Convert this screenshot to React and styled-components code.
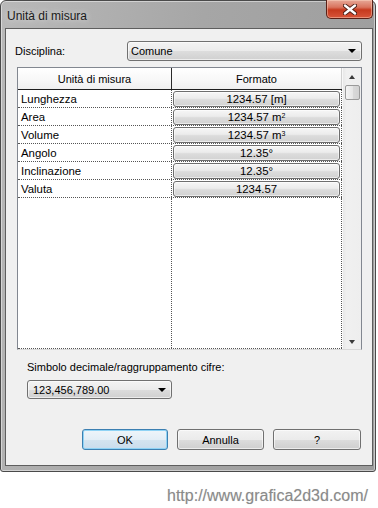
import React from 'react';
import styled, { createGlobalStyle } from 'styled-components';

const GlobalStyle = createGlobalStyle`
  html, body {
    margin: 0;
    padding: 0;
    background: #ffffff;
  }
  body {
    font-family: "Liberation Sans", Arial, sans-serif;
    font-size: 11px;
    color: #000;
  }
`;

// window frame
const Window = styled.div`
  box-sizing: border-box;
  width: 376px;
  height: 472px;
  border: 1px solid #4a4a4a;
  border-radius: 6px 6px 3px 3px;
  background: linear-gradient(100deg, #b9b9b9 0%, #a6a6a6 45%, #9c9c9c 100%);
  box-shadow: inset 0 0 0 1px rgba(255, 255, 255, 0.45);
  padding: 0 2px 5px 4px;
  display: flex;
  flex-direction: column;
`;

const TitleBar = styled.div`
  height: 27px;
  display: flex;
  align-items: flex-start;
  justify-content: space-between;
`;

const Title = styled.div`
  font-size: 12px;
  color: #1a1a1a;
  padding: 8px 0 0 2px;
  text-shadow: 0 0 6px rgba(255, 255, 255, 0.7);
`;

const CloseButton = styled.div`
  box-sizing: border-box;
  width: 47px;
  height: 19px;
  margin-top: -1px;
  border: 1px solid #5a2016;
  border-top: none;
  border-radius: 0 0 5px 5px;
  background: linear-gradient(180deg, #e7a897 0%, #d9745e 40%, #c6391d 55%, #d8553a 100%);
  box-shadow: inset 0 0 0 1px rgba(255, 220, 200, 0.45);
  display: flex;
  align-items: center;
  justify-content: center;
`;

const Client = styled.div`
  box-sizing: border-box;
  height: 438px;
  border: 1px solid #5e5e5e;
  background: #f0f0f0;
  padding: 12px 10px 15px 9px;
  display: flex;
  flex-direction: column;
`;

const FieldRow = styled.div`
  display: flex;
  align-items: center;
  justify-content: space-between;
`;

const Label = styled.span`
  line-height: 13px;
  white-space: nowrap;
`;

const Combo = styled.div`
  box-sizing: border-box;
  width: ${(p) => p.w}px;
  height: ${(p) => p.h}px;
  border: 1px solid #707070;
  border-radius: 3px;
  background: linear-gradient(180deg, #f3f3f3 0%, #ebebeb 50%, #dddddd 51%, #d0d0d0 100%);
  box-shadow: inset 0 0 0 1px rgba(255, 255, 255, 0.6);
  display: flex;
  align-items: center;
  justify-content: space-between;
  padding: 0 5px 0 ${(p) => p.pl}px;
`;

const Arrow = styled.span`
  width: 0;
  height: 0;
  border-left: 4px solid transparent;
  border-right: 4px solid transparent;
  border-top: 4px solid #000;
`;

const Grid = styled.div`
  box-sizing: border-box;
  height: 283px;
  margin: 6px 0 0 2px;
  border: 1px solid #828790;
  border-bottom-color: #d8d8d8;
  background: #fff;
  display: flex;
`;

const TableArea = styled.div`
  width: 324px;
  display: flex;
  flex-direction: column;
`;

const Header = styled.div`
  display: grid;
  grid-template-columns: 154px 1fr;
  height: 22px;
  box-sizing: border-box;
  border-bottom: 1px solid #1e1e1e;
  background: linear-gradient(180deg, #ffffff 0%, #f7f7f7 60%, #efefef 100%);
`;

const HeadCell = styled.div`
  display: flex;
  align-items: center;
  justify-content: center;
  border-right: 1px solid #2a2a2a;
  ${(p) => p.last && 'border-right-color: #d0d0d0;'}
`;

const Row = styled.div`
  display: grid;
  grid-template-columns: 154px 1fr;
  height: 18px;
  box-sizing: border-box;
  border-bottom: 1px dotted #555;
`;

const Filler = styled(Row)`
  flex: 1;
  height: auto;
`;

const NameCell = styled.div`
  border-right: 1px dotted #555;
  padding-left: 3px;
  display: flex;
  align-items: center;
  font-size: 11.4px;
`;

const FormatCell = styled.div`
  border-right: 1px dotted #555;
  padding: 1px 1px 0;
`;

const CellButton = styled.div`
  box-sizing: border-box;
  height: 16px;
  border: 1px solid #6e6e6e;
  border-radius: 3px;
  background: linear-gradient(180deg, #f6f6f6 0%, #ececec 45%, #dcdcdc 55%, #d2d2d2 100%);
  box-shadow: inset 0 0 0 1px rgba(255, 255, 255, 0.55);
  display: flex;
  align-items: center;
  justify-content: center;
  font-size: 11.4px;
  line-height: 12px;

  sup {
    font-size: 7px;
    line-height: 0;
    position: relative;
    top: -1px;
  }
`;

const ScrollBar = styled.div`
  flex: 1;
  display: flex;
  flex-direction: column;
  align-items: center;
  background: linear-gradient(90deg, #e8e8e8 0%, #f0f0f0 20%, #eeeeee 100%);
  border-left: 1px solid #f8f8f8;
`;

const ScrollArrow = styled.span`
  width: 0;
  height: 0;
  border-left: 3.5px solid transparent;
  border-right: 3.5px solid transparent;
  ${(p) =>
    p.down
      ? 'border-top: 4px solid #3a3a3a; margin-top: auto; margin-bottom: 5px;'
      : 'border-bottom: 4px solid #3a3a3a; margin-top: 7px;'}
`;

const Thumb = styled.div`
  box-sizing: border-box;
  width: 15px;
  height: 15px;
  margin-top: 6px;
  border: 1px solid #9a9a9a;
  border-radius: 2px;
  background: linear-gradient(90deg, #f4f4f4 0%, #e6e6e6 50%, #d9d9d9 51%, #d2d2d2 100%);
`;

const Section = styled.div`
  display: flex;
  flex-direction: column;
  gap: 6px;
  margin: 11px 0 0 12px;
`;

const Buttons = styled.div`
  display: flex;
  gap: 9px;
  margin: 30px 0 0 67px;
`;

const PushButton = styled.div`
  box-sizing: border-box;
  width: ${(p) => p.w}px;
  height: 21px;
  border: 1px solid ${(p) => (p.primary ? '#3c7fb1' : '#707070')};
  border-radius: 3px;
  background: ${(p) =>
    p.primary
      ? 'linear-gradient(180deg, #eef5fa 0%, #e3eef6 50%, #d4e4f0 51%, #c9dcec 100%)'
      : 'linear-gradient(180deg, #f2f2f2 0%, #ebebeb 50%, #dddddd 51%, #cfcfcf 100%)'};
  box-shadow: inset 0 0 0 1px ${(p) => (p.primary ? '#8fd3f5' : 'rgba(255,255,255,0.6)')};
  display: flex;
  align-items: center;
  justify-content: center;
`;

const Footer = styled.div`
  width: 368px;
  margin-top: 15px;
  text-align: right;
  font-family: "Liberation Sans", Arial, sans-serif;
  font-size: 16px;
  color: #8a8a8a;
  text-shadow: 0 0 1px #d8d8d8;
`;

const units = [
  { name: 'Lunghezza', format: <>1234.57 [m]</> },
  { name: 'Area', format: <>1234.57 m<sup>2</sup></> },
  { name: 'Volume', format: <>1234.57 m<sup>3</sup></> },
  { name: 'Angolo', format: <>12.35°</> },
  { name: 'Inclinazione', format: <>12.35°</> },
  { name: 'Valuta', format: <>1234.57</> },
];

const CloseIcon = () => (
  <svg width="14" height="11" viewBox="0 0 14 11">
    <path d="M2 1.5 L12 9.5 M12 1.5 L2 9.5" stroke="#4a1d14" strokeWidth="4.2" strokeLinecap="round" />
    <path d="M2 1.5 L12 9.5 M12 1.5 L2 9.5" stroke="#ffffff" strokeWidth="2.4" strokeLinecap="round" />
  </svg>
);

export default function App() {
  return (
    <>
      <GlobalStyle />
      <Window>
        <TitleBar>
          <Title>Unità di misura</Title>
          <CloseButton>
            <CloseIcon />
          </CloseButton>
        </TitleBar>
        <Client>
          <FieldRow>
            <Label>Disciplina:</Label>
            <Combo w={235} h={20} pl={3}>
              <span>Comune</span>
              <Arrow />
            </Combo>
          </FieldRow>

          <Grid>
            <TableArea>
              <Header>
                <HeadCell>Unità di misura</HeadCell>
                <HeadCell last>Formato</HeadCell>
              </Header>
              {units.map((u) => (
                <Row key={u.name}>
                  <NameCell>{u.name}</NameCell>
                  <FormatCell>
                    <CellButton>{u.format}</CellButton>
                  </FormatCell>
                </Row>
              ))}
              <Filler>
                <NameCell />
                <FormatCell />
              </Filler>
            </TableArea>
            <ScrollBar>
              <ScrollArrow />
              <Thumb />
              <ScrollArrow down />
            </ScrollBar>
          </Grid>

          <Section>
            <Label>Simbolo decimale/raggruppamento cifre:</Label>
            <Combo w={145} h={19} pl={5}>
              <span>123,456,789.00</span>
              <Arrow />
            </Combo>
          </Section>

          <Buttons>
            <PushButton w={86} primary>OK</PushButton>
            <PushButton w={87}>Annulla</PushButton>
            <PushButton w={88}>?</PushButton>
          </Buttons>
        </Client>
      </Window>
      <Footer>http://www.grafica2d3d.com/</Footer>
    </>
  );
}
